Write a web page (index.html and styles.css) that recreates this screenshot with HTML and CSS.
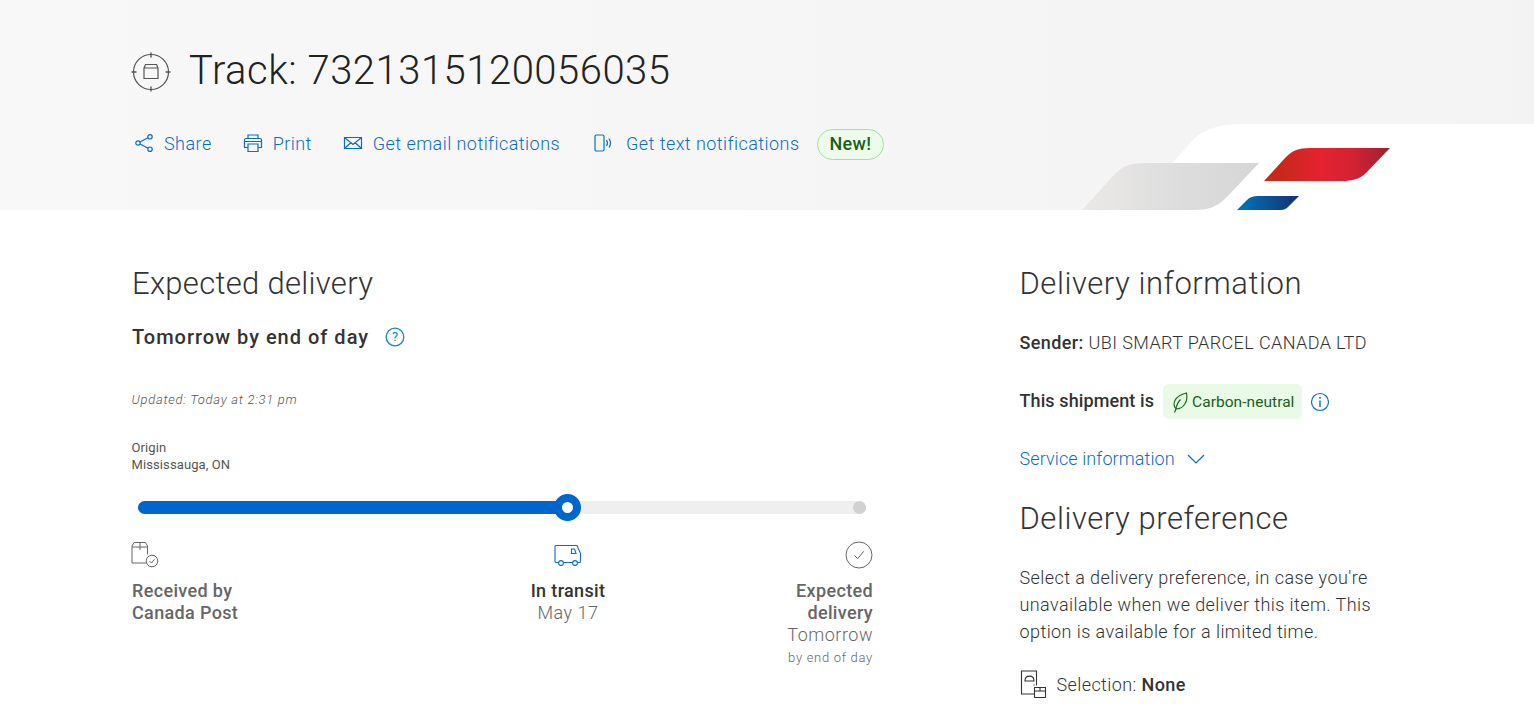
FILE: index.html
```html
<!DOCTYPE html>
<html lang="en">
<head>
<meta charset="utf-8">
<title>Track: 7321315120056035</title>
<link rel="stylesheet" href="styles.css">
</head>
<body>
<header class="hero">
  <svg class="swoosh" width="460" height="86" viewBox="1074 124 460 86" aria-hidden="true">
    <defs>
      <linearGradient id="g-gray" x1="0" x2="1" y1="0" y2="0"><stop offset="0" stop-color="#ebe9e8"/><stop offset="0.6" stop-color="#dcdcdc"/><stop offset="1" stop-color="#d6d6d6"/></linearGradient>
      <linearGradient id="g-red" x1="0" x2="1" y1="0" y2="0"><stop offset="0" stop-color="#c42a17"/><stop offset="0.14" stop-color="#c8281b"/><stop offset="0.45" stop-color="#e52230"/><stop offset="0.7" stop-color="#d42233"/><stop offset="1" stop-color="#a01f34"/></linearGradient>
      <linearGradient id="g-blue" x1="0" x2="1" y1="0" y2="0"><stop offset="0" stop-color="#0077bb"/><stop offset="1" stop-color="#172f72"/></linearGradient>
    </defs>
    <path d="M1173 162 L1194 139 C1204 129 1220 124 1245 124 L1534 124 L1534 210 L1173 210 Z" fill="#fff"/>
    <path d="M1082 210 L1114 175 C1122 166 1130 163 1146 163 L1259 163 L1226 198 C1217 207 1208 210 1194 210 Z" fill="url(#g-gray)"/>
    <path d="M1264 181 L1286 157 C1292 151 1298 148 1310 148 L1390 148 L1366 173 C1360 179 1352 181 1342 181 Z" fill="url(#g-red)"/>
    <path d="M1237 210 L1247 200 C1250 197 1253 196 1258 196 L1299 196 L1288 207 C1286 209 1284 210 1281 210 Z" fill="url(#g-blue)"/>
  </svg>
  <div class="hero-title">
    <svg class="track-icon" width="40" height="40" viewBox="0 0 40 40" fill="none" stroke="#555" aria-hidden="true">
      <circle cx="20" cy="20" r="17.500" stroke-width="1.200"/>
      <path d="M20 0.500v5M20 34.500v5M0.500 20h5M34.500 20h5" stroke-width="1.400"/>
      <path d="M13 16l1.500-3.500h11l1.500 3.500v10.500h-14zM13 16h14" stroke-width="1.200"/>
    </svg>
    <h1 class="track-number">Track: 7321315120056035</h1>
  </div>
  <nav class="actions">
    <a class="action action-share">
      <svg class="action-icon" width="20" height="20" viewBox="0 0 20 20" fill="none" stroke="#0a6ccb" stroke-width="1.200" aria-hidden="true"><circle cx="4" cy="10" r="2.200"/><circle cx="16" cy="3.800" r="2.200"/><circle cx="16" cy="16.200" r="2.200"/><path d="M6 9l8-4.200M6 11l8 4.200"/></svg>
      Share
    </a>
    <a class="action action-print">
      <svg class="action-icon" width="20" height="20" viewBox="0 0 20 20" fill="none" stroke="#0a6ccb" stroke-width="1.200" aria-hidden="true"><path d="M5 5.500V2h10v3.500M5 14.500H1.500V7c0-1 .6-1.500 1.500-1.500h14c.9 0 1.500.5 1.500 1.500v7.500H15"/><path d="M5 11h10v7.500H5zM1.500 8.500h17"/></svg>
      Print
    </a>
    <a class="action action-email">
      <svg class="action-icon" width="20" height="20" viewBox="0 0 20 20" fill="none" stroke="#0a6ccb" stroke-width="1.200" aria-hidden="true"><path d="M1.500 4.500h17v11h-17zM1.500 4.500l8.500 7 8.500-7M1.500 15.500l6.300-5.800M18.500 15.500l-6.300-5.800"/></svg>
      Get email notifications
    </a>
    <a class="action action-text">
      <svg class="action-icon" width="20" height="20" viewBox="0 0 20 20" fill="none" stroke="#0a6ccb" stroke-width="1.200" aria-hidden="true"><rect x="2" y="2" width="9" height="16" rx="1.500"/><path d="M13.500 7c1.200 1.800 1.200 4.200 0 6M16 5.500c1.800 2.700 1.800 6.300 0 9"/></svg>
      Get text notifications
    </a>
    <span class="badge-new">New!</span>
  </nav>
</header>

<main class="content">
  <section class="delivery">
    <h2 class="section-title section-title-main">Expected delivery</h2>
    <div class="eta">
      <strong class="eta-text">Tomorrow by end of day</strong>
      <svg width="20" height="20" viewBox="0 0 20 20" fill="none" aria-hidden="true"><circle cx="10" cy="10" r="8.800" stroke="#1a82c8" stroke-width="1.300"/><text class="glyph" x="10" y="14.200" text-anchor="middle" fill="#1a82c8">?</text></svg>
    </div>
    <p class="updated">Updated: Today at 2:31 pm</p>
    <p class="origin">Origin<br>Mississauga, ON</p>
    <div class="progress">
      <div class="progress-fill"></div>
      <span class="progress-knob"></span>
      <span class="progress-end"></span>
    </div>
    <div class="steps">
      <div class="step step-start">
        <svg class="step-icon-start" width="28" height="28" viewBox="0 0 28 28" fill="none" stroke="#666" stroke-width="1" aria-hidden="true"><path d="M17.500 22H1V5l2-3.500h11.500l2 3.500v8.500M1 6h15.500M9 1.500V9"/><circle cx="21" cy="20" r="5.800" fill="#fff"/><path d="M18.500 20l2 2 3-3.800"/></svg>
        <div class="step-title">Received by<br>Canada Post</div>
      </div>
      <div class="step step-mid">
        <svg width="28" height="28" viewBox="0 0 28 28" fill="none" stroke="#0a6ccb" stroke-width="1.100" aria-hidden="true"><path d="M4.500 21.500H2c-.6 0-1-.4-1-1V5.500c0-.6.400-1 1-1h21l3.500 8v8c0 .6-.4 1-1 1h-2M9.500 21.500h9"/><circle cx="7" cy="22" r="2.400"/><circle cx="21" cy="22" r="2.400"/><path d="M17.500 8v4.500h4.500l-1.500-4.500z"/></svg>
        <div class="step-title step-current">In transit</div>
        <div class="step-date">May 17</div>
      </div>
      <div class="step step-end">
        <svg width="28" height="28" viewBox="0 0 28 28" fill="none" stroke="#666" stroke-width="1" aria-hidden="true"><circle cx="14" cy="14" r="13"/><path d="M9.500 14.500l3.200 3.200 6-7.400"/></svg>
        <div class="step-title">Expected<br>delivery</div>
        <div class="step-date">Tomorrow</div>
        <div class="step-note">by end of day</div>
      </div>
    </div>
  </section>

  <aside class="info">
    <h2 class="section-title">Delivery information</h2>
    <p class="sender"><strong>Sender:</strong> UBI SMART PARCEL CANADA LTD</p>
    <div class="carbon-row">
      <strong class="carbon-label">This shipment is</strong>
      <span class="carbon-badge">
        <svg width="18" height="24" viewBox="0 0 18 24" fill="none" stroke="#1b6b1f" stroke-width="1.200" aria-hidden="true"><path d="M5 19C1 14 3 6 15.500 3c1.500 7.500-2 16-10.500 16zM5 19l-1.500 3.500M5 19C5.500 15 7 12 9.500 9.500"/></svg>
        Carbon-neutral
      </span>
      <svg width="20" height="20" viewBox="0 0 20 20" fill="none" aria-hidden="true"><circle cx="10" cy="10" r="8.500" stroke="#0a6ccb" stroke-width="1.200"/><path d="M10 8.500V15" stroke="#0a6ccb" stroke-width="1.400"/><circle cx="10" cy="5.800" r="1" fill="#0a6ccb"/></svg>
    </div>
    <a class="service-link">Service information
      <svg width="18" height="10" viewBox="0 0 18 10" fill="none" stroke="#0a6ccb" stroke-width="1.200" aria-hidden="true"><path d="M1 1l8 8 8-8"/></svg>
    </a>
    <h2 class="section-title preference-title">Delivery preference</h2>
    <p class="preference-text">Select a delivery preference, in case you're unavailable when we deliver this item. This option is available for a limited time.</p>
    <div class="selection">
      <svg width="28" height="28" viewBox="0 0 28 28" fill="none" stroke="#333" stroke-width="1.100" aria-hidden="true"><path d="M14 24H1.500V1h15v14.500M5 11c0-6.500 9-6.500 9 0zM13.500 15h1.200"/><path d="M14.500 17.500h11v10h-11zM14.500 21h11M20 17.500V21"/></svg>
      <span class="selection-text">Selection: <strong>None</strong></span>
    </div>
  </aside>
</main>
</body>
</html>
```
FILE: styles.css
```css
* { box-sizing: border-box; }
html, body { margin: 0; padding: 0; height: 716px; overflow: hidden; }
body {
  font-family: Roboto, "Liberation Sans", sans-serif;
  font-weight: 300;
  color: #333;
  background: #fff;
}
p, h1, h2 { margin: 0; font-weight: 300; }
strong { font-weight: 500; }

.hero {
  position: relative;
  height: 210px;
  padding: 50px 0 0 132px;
  background: linear-gradient(90deg, #f9f8f8 0%, #f3f3f3 100%);
  overflow: hidden;
}
.swoosh { position: absolute; right: 0; bottom: 0; display: block; }
.hero-title { display: flex; align-items: center; gap: 18px; height: 44px; margin-left: -1px; }
.track-number { padding-bottom: 2px; font-size: 40px; line-height: 44px; color: #222; letter-spacing: .5px; }
.actions { display: flex; align-items: center; margin: 33px 0 0 2px; height: 32px; }
.action { display: flex; align-items: center; gap: 10px; font-size: 18px; font-weight: 300; letter-spacing: .45px; color: #0a6ccb; }
.action-share { margin-right: 31px; }
.action-print { margin-right: 31px; }
.action-email { margin-right: 33px; }
.action-text { margin-right: 17px; gap: 13px; }
.action-icon { flex: none; }
.badge-new {
  display: flex; align-items: center; height: 31px; margin-top: 2px; padding: 0 12px;
  font-size: 18px; font-weight: 500; line-height: 28px; letter-spacing: .3px;
  color: #1b5e20; background: #edfbea; border: 1px solid #a5dfa0; border-radius: 16px;
}

.content { display: flex; padding: 56px 0 0 132px; }
.delivery { width: 741px; margin-right: 146.5px; flex: none; }
.info { width: 360px; flex: none; }
.section-title { font-size: 31px; line-height: 36px; color: #333; letter-spacing: .55px; }
.section-title-main { letter-spacing: .3px; }

.eta { display: flex; align-items: center; gap: 16px; margin-top: 21px; height: 28px; }
.eta-text { font-size: 20px; letter-spacing: 1px; color: #333; }
.glyph { font: 400 13px Roboto, sans-serif; }
.updated { margin: 39px 0 0 -.5px; font-size: 13px; line-height: 20px; font-style: italic; letter-spacing: .72px; color: #555; }
.origin { margin: 29px 0 0 -.5px; font-size: 13px; line-height: 17px; font-weight: 400; letter-spacing: .1px; color: #555; }

.progress { position: relative; height: 13px; margin: 28px 7px 0 6px; background: #efefef; border-radius: 7px; }
.progress-fill { width: 430px; height: 13px; background: #0066cc; border-radius: 7px; }
.progress-knob {
  position: absolute; left: 416px; top: -7px; width: 27px; height: 27px;
  border: 8px solid #0066cc; border-radius: 50%; background: #fff;
}
.progress-end { position: absolute; right: 0; top: 0; width: 13px; height: 13px; border-radius: 50%; background: #d1d1d1; }

.steps { display: grid; grid-template-columns: 346px 180px 1fr; margin-top: 27px; }
.step { display: flex; flex-direction: column; font-size: 18px; line-height: 22px; color: #666; }
.step-mid { align-items: center; }
.step-end { align-items: flex-end; text-align: right; }
.step svg { display: block; margin-bottom: 11px; }
.step .step-icon-start { margin-left: -1px; }
.step-title { font-weight: 500; letter-spacing: .35px; }
.step-current { color: #333; }
.step-date { letter-spacing: .5px; }
.step-note { font-size: 13px; letter-spacing: .7px; line-height: 24px; }

.sender { margin-top: 27px; font-size: 18px; line-height: 28px; letter-spacing: .4px; }
.carbon-row { display: flex; align-items: center; margin-top: 27px; height: 35px; }
.carbon-label { padding-bottom: 2px; font-size: 18px; letter-spacing: .1px; margin-right: 9px; }
.carbon-badge {
  display: flex; align-items: center; gap: 3px; height: 35px; padding: 0 8px;
  margin-right: 8px; font-size: 15.5px; font-weight: 400; letter-spacing: .05px; color: #1b5e20;
  background: #e9fae6; border-radius: 6px;
}
.service-link { display: flex; align-items: center; gap: 12px; margin-top: 26px; font-size: 18px; line-height: 28px; letter-spacing: .1px; color: #0a6ccb; }
.preference-title { margin-top: 28px; }
.preference-text { width: 360px; margin-top: 27px; font-size: 18px; line-height: 27px; letter-spacing: .42px; }
.selection { display: flex; align-items: center; gap: 9px; margin-top: 25px; }
.selection-text { font-size: 18px; letter-spacing: .4px; }
```
